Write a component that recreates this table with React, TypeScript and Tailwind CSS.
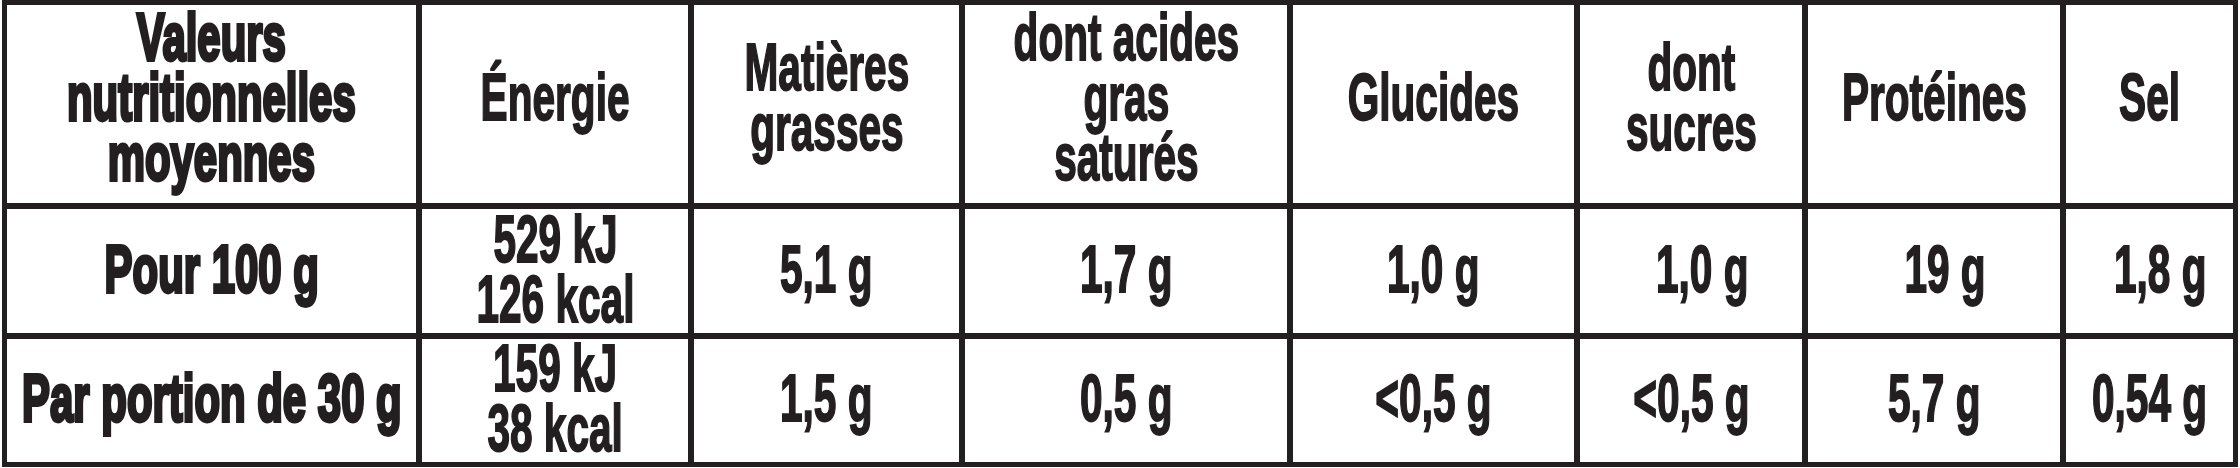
import type { ReactNode } from "react"

// Nutrition facts table: thick dark rules, condensed bold lettering.
const headers: ReactNode[] = [
  <>Énergie</>,
  <>Matières<br />grasses</>,
  <>dont acides<br />gras<br />saturés</>,
  <>Glucides</>,
  <>dont<br />sucres</>,
  <>Protéines</>,
  <>Sel</>,
]

const rows: { label: string; values: ReactNode[]; shift: boolean[] }[] = [
  {
    label: "Pour 100 g",
    values: [<>529 kJ<br />126 kcal</>, "5,1 g", "1,7 g", "1,0 g", "1,0 g", "19 g", "1,8 g"],
    shift: [false, false, false, false, true, true, true],
  },
  {
    label: "Par portion de 30 g",
    values: [<>159 kJ<br />38 kcal</>, "1,5 g", "0,5 g", "<0,5 g", "<0,5 g", "5,7 g", "0,54 g"],
    shift: [false, false, false, false, false, false, false],
  },
]

function Cell({
  children,
  bold = false,
  shift = false,
  head = false,
}: {
  children: ReactNode
  bold?: boolean
  shift?: boolean
  head?: boolean
}) {
  return (
    <div
      className={`bg-white flex items-center justify-center ${head ? "pb-[14px]" : "pb-[5px]"} ${
        shift ? "pl-[22px]" : ""
      }`}
    >
      <span
        className={
          bold
            ? "inline-block whitespace-nowrap text-center scale-x-[0.635] [-webkit-text-stroke:3.8px_#231f20]"
            : "inline-block whitespace-nowrap text-center scale-x-[0.615] [-webkit-text-stroke:1.8px_#231f20]"
        }
      >
        {children}
      </span>
    </div>
  )
}

export default function App() {
  return (
    <div className="w-[2240px] h-[468px] bg-white">
      <div
        className="ml-[2px] w-[2236px] grid grid-cols-[409px_266px_265px_322px_281px_222px_252px_167px] grid-rows-[198px_124px_123px] gap-[6px] p-[5px] bg-[#231f20] text-[#231f20] text-[66px] leading-[60px] font-bold"
        style={{ fontFamily: '"Liberation Sans", Arial, sans-serif' }}
      >
        <Cell bold head>
          Valeurs<br />nutritionnelles<br />moyennes
        </Cell>
        {headers.map((h, i) => (
          <Cell key={i} head>
            {h}
          </Cell>
        ))}
        {rows.map((r) => (
          <>
            <Cell bold key={r.label}>{r.label}</Cell>
            {r.values.map((v, i) => (
              <Cell key={r.label + i} shift={r.shift[i]}>
                {v}
              </Cell>
            ))}
          </>
        ))}
      </div>
    </div>
  )
}
